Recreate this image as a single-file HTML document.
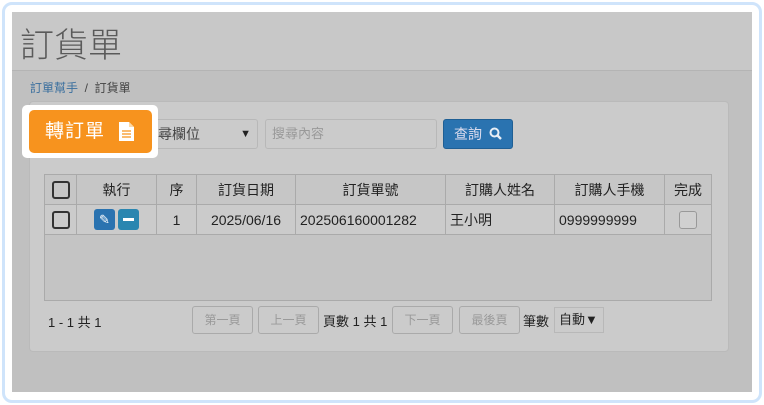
<!DOCTYPE html><html><head><meta charset="utf-8"><style>
*{box-sizing:border-box;margin:0;padding:0}
body{width:764px;height:405px;background:#fff;font-family:"Liberation Sans","Noto Sans CJK TC",sans-serif;position:relative;overflow:hidden}
.frame{position:absolute;left:2px;top:2px;width:760px;height:401px;border:3px solid #cfe4fb;border-radius:10px;background:#fff}
.scr{position:absolute;left:12px;top:12px;width:740px;height:380px;background:#c0c0c0;overflow:hidden}
.a{position:absolute}
.hdr{left:0;top:0;width:740px;height:59px;background:#c8c8c8;border-bottom:1px solid #b4b4b4}
.title{left:8px;top:6px;font-size:34px;color:#5a5a5a;font-weight:300}
.bc{left:18px;top:67px;font-size:12px;color:#444}
.bc span{color:#3a6f9e}
.panel{left:17px;top:89px;width:700px;height:251px;background:#cbcbcb;border:1px solid #bababa;border-radius:4px}
.t{position:absolute;border-collapse:collapse;font-size:14px;color:#222}
.t td{border:1px solid #aaa;text-align:center;height:30px}
.cb{display:inline-block;width:18px;height:18px;border:2px solid #333;border-radius:3px;vertical-align:middle}
.btn{position:absolute;height:28px;border:1px solid #aaa;border-radius:3px;font-size:12px;color:#999;text-align:center;line-height:26px;top:294px}
</style></head><body>
<div class="frame"></div>
<div class="scr">
<div class="a hdr"></div>
<div class="a title">訂貨單</div>
<div class="a bc"><span>訂單幫手</span> &nbsp;/&nbsp; 訂貨單</div>
<div class="a panel"></div>
<div class="a" style="left:133px;top:107px;width:113px;height:30px;border:1px solid #b8b8b8;border-radius:3px;font-size:14px;color:#444;line-height:28px;padding-left:12px">尋欄位<span style="position:absolute;right:6px;font-size:11px;color:#222">▼</span></div>
<div class="a" style="left:253px;top:107px;width:172px;height:30px;border:1px solid #b8b8b8;border-radius:3px;font-size:13px;color:#999;line-height:28px;padding-left:6px">搜尋內容</div>
<div class="a" style="left:431px;top:107px;width:70px;height:30px;background:#2a73b0;border:1px solid #1f5f94;border-radius:3px;font-size:14px;color:#dde;line-height:28px;padding-left:10px">查詢 <svg width="13" height="13" viewBox="0 0 13 13" style="vertical-align:-1px;margin-left:3px"><circle cx="5.5" cy="5.5" r="4" fill="none" stroke="#e8eef5" stroke-width="2"/><path d="M8.5 8.5L12 12" stroke="#e8eef5" stroke-width="2.4"/></svg></div>
<table class="t" style="left:32px;top:162px;width:668px">
<tr style="background:#c6c6c6"><td style="width:32px"><span class="cb"></span></td><td style="width:80px">執行</td><td style="width:40px">序</td><td style="width:99px">訂貨日期</td><td style="width:150px">訂貨單號</td><td style="width:109px">訂購人姓名</td><td style="width:110px">訂購人手機</td><td>完成</td></tr>
<tr><td><span class="cb"></span></td><td><span style="display:inline-block;width:21px;height:21px;background:#2a73b0;border-radius:3px;vertical-align:middle;margin-right:3px;color:#fff;font-size:13px;line-height:21px">✎</span><span style="display:inline-block;width:21px;height:21px;background:#2a86b0;border-radius:3px;vertical-align:middle;position:relative"><span style="position:absolute;left:5px;top:9px;width:11px;height:3px;background:#fff"></span></span></td><td>1</td><td>2025/06/16</td><td style="text-align:left;padding-left:4px">202506160001282</td><td style="text-align:left;padding-left:4px">王小明</td><td style="text-align:left;padding-left:4px">0999999999</td><td><span style="display:inline-block;width:18px;height:18px;border:1px solid #999;border-radius:3px;vertical-align:middle;background:#d0d0d0"></span></td></tr>
<tr><td colspan="8" style="height:66px;border-top:none;background:#c4c4c4"></td></tr>
</table>
<div class="a" style="left:36px;top:300px;font-size:13px;color:#222">1 - 1 共 1</div>
<div class="btn" style="left:180px;width:61px">第一頁</div>
<div class="btn" style="left:246px;width:61px">上一頁</div>
<div class="a" style="left:311px;top:299px;font-size:13px;color:#222">頁數 1 共 1</div>
<div class="btn" style="left:380px;width:61px">下一頁</div>
<div class="btn" style="left:447px;width:61px">最後頁</div>
<div class="a" style="left:511px;top:299px;font-size:13px;color:#222">筆數</div>
<div class="a" style="left:542px;top:295px;width:50px;height:26px;border:1px solid #b8b8b8;font-size:13px;color:#222;line-height:24px;padding-left:4px">自動▼</div>
</div>
<div class="a" style="left:22px;top:105px;width:136px;height:53px;background:#fff;border-radius:5px"></div>
<div class="a" style="left:29px;top:110px;width:123px;height:43px;background:#f7931e;border-radius:5px;color:#fff;font-size:19px;letter-spacing:1px;line-height:43px;padding-left:16px">轉訂單<svg width="17" height="21" viewBox="0 0 17 21" style="position:absolute;left:89px;top:11px"><path d="M1 1h10l5 5v14H1z" fill="#fff"/><path d="M11 1v5h5" fill="#fcd9a8"/><path d="M4 10h9M4 13h9M4 16h9" stroke="#f7931e" stroke-width="1.3"/></svg></div>
</body></html>
